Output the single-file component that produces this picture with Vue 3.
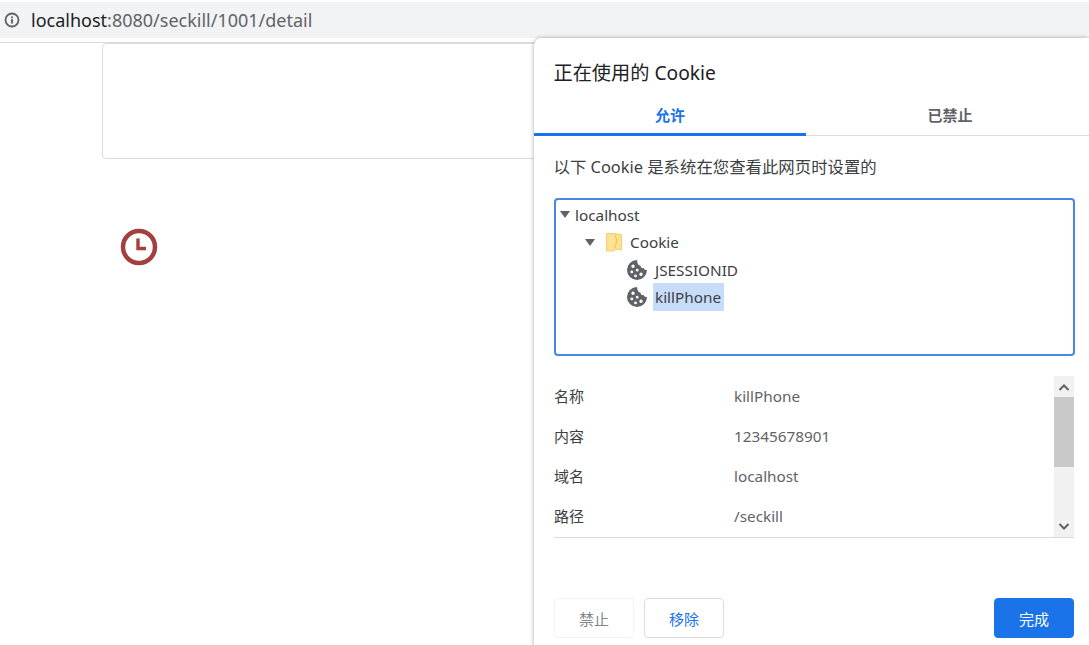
<script setup>
const details = [
  { label: '名称', value: 'killPhone' },
  { label: '内容', value: '12345678901' },
  { label: '域名', value: 'localhost' },
  { label: '路径', value: '/seckill' }
]
</script>

<template>
  <div class="page">
    <header class="bar">
      <svg class="info" width="16" height="16" viewBox="0 0 16 16">
        <circle cx="8" cy="8" r="6.500" fill="none" stroke="#5f6368" stroke-width="1.800" />
        <rect x="7.100" y="7" width="1.800" height="4.600" fill="#5f6368" />
        <rect x="7.100" y="4.400" width="1.800" height="1.800" fill="#5f6368" />
      </svg>
      <span class="url"><span class="host">localhost</span>:8080/seckill/1001/detail</span>
    </header>
    <main class="content">
      <div class="card"></div>
      <svg class="clock" width="38" height="38" viewBox="0 0 38 38">
        <circle cx="19" cy="19" r="16" fill="none" stroke="#a33f3f" stroke-width="4.500" />
        <path d="M18 10.500V20.500H26" fill="none" stroke="#a33f3f" stroke-width="3.400" />
      </svg>
    </main>

    <section class="dialog">
      <h2 class="title">正在使用的 Cookie</h2>
      <div class="tabs">
        <div class="tab active">允许</div>
        <div class="tab">已禁止</div>
      </div>
      <div class="body">
        <p class="lead">以下 Cookie 是系统在您查看此网页时设置的</p>
        <div class="tree">
          <div class="row lvl0"><span class="tri"></span>localhost</div>
          <div class="row lvl1">
            <span class="tri"></span>
            <svg class="folder" width="18" height="20" viewBox="0 0 18 20">
              <path d="M1.500 1.500H9L16.500 2.500V18L10 17L9 19H1.500Z" fill="#fde293" stroke="#f2cf72" stroke-width="1" />
              <path d="M10 3L12 9L9.500 16" fill="none" stroke="#eec04f" stroke-width="1" />
            </svg>
            Cookie
          </div>
          <div class="row lvl2">
            <svg class="cookie" width="20" height="20" viewBox="0 0 20 20">
              <path fill="#5f6368" fill-rule="evenodd" d="M10 0a10 10 0 1 0 10 10c-1.800.3-2.900-.4-3.300-1.900-1.800.4-3.200-.8-3.200-2.600-1.800.1-3.300-1.700-3.500-5.500ZM6 4.500a1.700 1.700 0 1 1 0 3.400 1.700 1.700 0 0 1 0-3.400Zm-1.200 6a1.400 1.400 0 1 1 0 2.800 1.400 1.400 0 0 1 0-2.800Zm5.400-1.700a1.400 1.400 0 1 1 0 2.800 1.400 1.400 0 0 1 0-2.800Zm3.800 3.700a1.700 1.700 0 1 1 0 3.400 1.700 1.700 0 0 1 0-3.400ZM8.500 14.500a1.400 1.400 0 1 1 0 2.800 1.400 1.400 0 0 1 0-2.800Z" />
            </svg>
            <span class="name">JSESSIONID</span>
          </div>
          <div class="row lvl2">
            <svg class="cookie" width="20" height="20" viewBox="0 0 20 20">
              <path fill="#5f6368" fill-rule="evenodd" d="M10 0a10 10 0 1 0 10 10c-1.800.3-2.900-.4-3.300-1.900-1.800.4-3.200-.8-3.200-2.600-1.800.1-3.300-1.700-3.500-5.500ZM6 4.500a1.700 1.700 0 1 1 0 3.400 1.700 1.700 0 0 1 0-3.400Zm-1.200 6a1.400 1.400 0 1 1 0 2.800 1.400 1.400 0 0 1 0-2.800Zm5.400-1.700a1.400 1.400 0 1 1 0 2.800 1.400 1.400 0 0 1 0-2.800Zm3.800 3.700a1.700 1.700 0 1 1 0 3.400 1.700 1.700 0 0 1 0-3.400ZM8.500 14.500a1.400 1.400 0 1 1 0 2.800 1.400 1.400 0 0 1 0-2.800Z" />
            </svg>
            <span class="name selected">killPhone</span>
          </div>
        </div>
        <div class="details">
          <div class="list">
            <div v-for="d in details" :key="d.label" class="detail">
              <span class="label">{{ d.label }}</span>
              <span class="value">{{ d.value }}</span>
            </div>
          </div>
          <div class="scroll">
            <svg width="20" height="21" viewBox="0 0 20 21"><path d="M5.500 14 10 9.500 14.500 14" fill="none" stroke="#5f6368" stroke-width="2" /></svg>
            <div class="thumb"></div>
            <div class="track"></div>
            <svg width="20" height="20" viewBox="0 0 20 20"><path d="M5.500 7 10 11.500 14.500 7" fill="none" stroke="#5f6368" stroke-width="2" /></svg>
          </div>
        </div>
        <footer class="actions">
          <button class="btn disabled">禁止</button>
          <button class="btn link">移除</button>
          <button class="btn primary">完成</button>
        </footer>
      </div>
    </section>
  </div>
</template>

<style>
html, body { margin: 0; background: #fff; overflow: hidden; }
</style>

<style scoped>
.page {
  position: relative;
  width: 1089px;
  height: 645px;
  overflow: hidden;
  background: #fff;
  font-family: "Noto Sans", "Noto Sans CJK SC", sans-serif;
  color: #202124;
}
.bar {
  box-sizing: border-box;
  height: 36px;
  margin-top: 2px;
  background: #f1f3f4;
  border-radius: 0 0 8px 0;
  display: flex;
  align-items: center;
  padding-left: 4px;
  gap: 11px;
}
.info { flex: none; }
.url { font-size: 18px; color: #5f6368; }
.host { color: #202124; }
.content {
  border-top: 1px solid #dadce0;
  margin-top: 4px;
  padding-left: 102px;
}
.card {
  box-sizing: border-box;
  width: 500px;
  height: 116px;
  border: 1px solid #dcdcdc;
  border-radius: 4px;
}
.clock { display: block; margin: 69px 0 0 18px; }
.dialog {
  position: absolute;
  left: 534px;
  top: 38px;
  width: 560px;
  height: 620px;
  background: #fff;
  border-radius: 8px 0 0 0;
  box-shadow: 0 0 4px rgba(60, 64, 67, .45);
}
.title {
  margin: 0;
  padding: 22px 0 0 19.500px;
  height: 37px;
  font-size: 19.200px;
  line-height: 26px;
  font-weight: 400;
}
.tabs {
  display: flex;
  width: 555px;
  height: 38px;
  border-bottom: 1px solid #dadce0;
}
.tab {
  flex: none;
  width: 272px;
  text-align: center;
  font-size: 15px;
  line-height: 37px;
  font-weight: 700;
  color: #5f6368;
  box-sizing: border-box;
  height: 39px;
}
.tab + .tab { width: 288px; }
.tab.active { color: #1a73e8; border-bottom: 3px solid #1a73e8; }
.body { padding: 0 15px 0 20px; width: 520px; }
.lead { margin: 20px 0 0 -.5px; font-size: 16.400px; line-height: 22px; color: #3c4043; }
.tree {
  box-sizing: border-box;
  margin: 20px -1px 0 0;
  height: 158px;
  border: 2px solid #4a86e8;
  border-radius: 4px;
  padding-top: 1px;
  font-size: 15.300px;
  color: #3c4043;
}
.row { display: flex; align-items: center; height: 27.500px; }
.lvl0 { padding-left: 4px; }
.lvl1 { padding-left: 29px; }
.lvl2 { padding-left: 71px; }
.tri {
  width: 0;
  height: 0;
  border-left: 5px solid transparent;
  border-right: 5px solid transparent;
  border-top: 7px solid #5f6368;
  margin-right: 5px;
}
.lvl1 .tri { margin-right: 10px; }
.folder { margin-right: 7px; }
.cookie { margin-right: 6px; }
.name { padding: 0 2px; line-height: 28px; }
.selected { background: #c6dcf9; padding-right: 3px; }
.details {
  box-sizing: border-box;
  margin-top: 20px;
  height: 162px;
  display: flex;
  border-bottom: 1px solid #dadce0;
  overflow: hidden;
}
.list { flex: 1; font-size: 15.300px; }
.detail { display: flex; height: 40px; align-items: center; }
.label { width: 180px; font-size: 15px; line-height: 20px; margin-top: -1px; color: #3c4043; }
.value { color: #5f6368; }
.scroll {
  width: 20px;
  background: #f1f1f1;
  display: flex;
  flex-direction: column;
  flex: none;
}
.thumb { height: 70px; flex: none; background: #c9c9c9; }
.track { flex: 1; }
.actions { display: flex; gap: 10px; margin-top: 60px; }
.btn {
  box-sizing: border-box;
  width: 80px;
  height: 40px;
  border-radius: 4px;
  border: 1px solid #dadce0;
  background: #fff;
  font: 15px "Noto Sans", "Noto Sans CJK SC", sans-serif;
}
.disabled { color: #80868b; border-color: #f1f3f4; }
.link { color: #1a73e8; }
.primary { margin-left: auto; background: #1a73e8; color: #fff; border-color: #1a73e8; }
</style>
